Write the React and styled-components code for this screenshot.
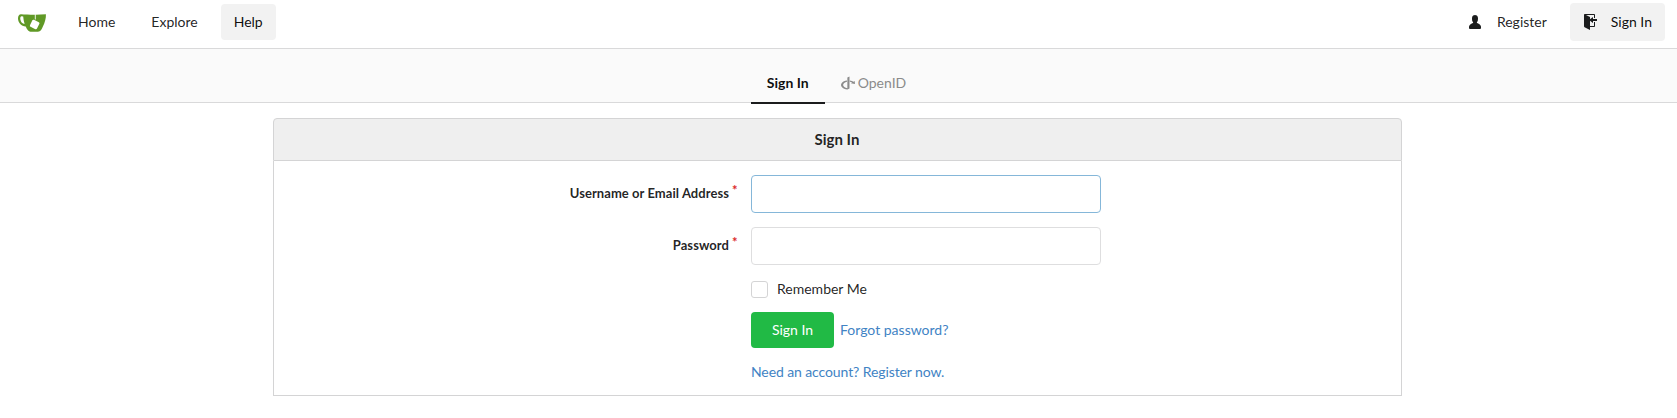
import React from "react";
import styled, { createGlobalStyle, css } from "styled-components";

const GlobalStyle = createGlobalStyle`
  *, *::before, *::after { box-sizing: border-box; }
  body {
    margin: 0;
    background: #fff;
    color: rgba(0, 0, 0, 0.87);
    font: 14px/20px Lato, "Liberation Sans", sans-serif;
  }
  a { color: inherit; text-decoration: none; }
`;

const Navbar = styled.nav`
  display: flex;
  align-items: flex-start;
  height: 49px;
  padding: 3px 12px 0 17px;
  border-bottom: 1px solid #d9d9da;
`;

const Brand = styled.a`
  display: flex;
  margin: 10px 18px 0 0;
`;

const NavItem = styled.a`
  display: flex;
  align-items: center;
  height: ${(p) => (p.$tall ? 38 : 36)}px;
  margin: ${(p) => (p.$tall ? "0 0 0 10px" : "1px 10px 0 0")};
  padding: 0 13px 1px 13px;
  border-radius: 4px;
  color: rgba(0, 0, 0, ${(p) => (p.$active ? 0.95 : 0.87)});
  background: ${(p) => (p.$active ? "#f2f2f2" : "transparent")};

  svg { margin-right: ${(p) => p.$iconGap || 0}px; fill: #1b1c1d; }
`;

const RightMenu = styled.div`
  display: flex;
  margin-left: auto;
`;

const TabBar = styled.div`
  display: flex;
  justify-content: center;
  align-items: flex-end;
  height: 54px;
  padding-right: 4px;
  background: #fafafa;
  border-bottom: 1px solid #d9d9da;
`;

const Tab = styled.a`
  display: flex;
  align-items: center;
  height: 40px;
  margin-bottom: -2px;
  padding: 0 16px;
  color: #8b8b8b;
  border-bottom: 2px solid transparent;
  ${(p) =>
    p.$active &&
    css`
      color: rgba(0, 0, 0, 0.95);
      font-weight: 700;
      border-bottom-color: #1b1c1d;
    `}
  svg { margin-right: 3px; fill: currentColor; }
`;

const Panel = styled.main`
  width: 1129px;
  margin: 15px auto 0 273px;
`;

const PanelHeader = styled.h4`
  display: flex;
  justify-content: center;
  align-items: center;
  height: 43px;
  margin: 0;
  padding: 0 1px 2px 0;
  border: 1px solid #d4d4d5;
  border-radius: 4px 4px 0 0;
  background: #efefef;
  font-size: 15px;
  font-weight: 700;
`;

const Form = styled.form`
  display: flex;
  flex-direction: column;
  height: 235px;
  padding-top: 14px;
  border: 1px solid #d4d4d5;
  border-top: 0;
`;

const Row = styled.div`
  display: grid;
  grid-template-columns: 463px 1fr;
  column-gap: 14px;
  align-items: center;
  height: ${(p) => p.$height}px;
  margin-bottom: ${(p) => p.$after}px;
`;

const Label = styled.label`
  display: flex;
  justify-content: flex-end;
  align-items: flex-start;
  height: 22px;
  font-size: 13px;
  font-weight: 700;
  letter-spacing: 0.06px;

  &::after {
    content: "*";
    width: 5px;
    margin: -3px 0 0 3px;
    color: #db2828;
  }
`;

const Input = styled.input`
  width: 350px;
  height: 38px;
  padding: 9px 14px;
  border: 1px solid ${(p) => (p.$focused ? "#85b7d9" : "#dededf")};
  border-radius: 4px;
  background: #fff;
  font: inherit;
  outline: none;
`;

const Controls = styled.div`
  grid-column: 2;
  display: flex;
  align-items: center;
`;

const Checkbox = styled.input`
  appearance: none;
  width: 17px;
  height: 17px;
  margin: 0 9px 0 0;
  border: 1px solid #d4d4d5;
  border-radius: 3px;
  background: #fff;
`;

const SubmitButton = styled.button`
  width: 83px;
  height: 36px;
  margin: 0 6px 0 0;
  padding: 0;
  border: 0;
  border-radius: 4px;
  background: #21ba45;
  color: #fff;
  font: inherit;
`;

const Link = styled.a`
  color: #4183c4;
  letter-spacing: ${(p) => (p.$tight ? "-0.1px" : "normal")};
`;

const TeaLogo = () => (
  <svg width="30" height="20" viewBox="0 0 30 20">
    <path
      fill="#609926"
      fillRule="evenodd"
      d="M4 1.2C8 1.4 14 1.8 18.5 1.7L28.9 1.2C29.2 5 27.8 9.5 26 13.3C24.6 16.6 23.6 18.5 21 18.8H13.5C11 18.6 9.7 15.7 8.7 13.6C4.3 13.1 1.1 9.8 1 5.5C1 3 2.1 1.2 4 1.2ZM4.7 3.3C3.4 3.4 3 4.7 3.4 6.7C4 9.2 5.3 10.5 7.6 11C6.8 8.7 6.4 6.1 6.2 3.5Z"
    />
    <path d="M18.3 1.2V6.5" stroke="#fff" strokeWidth=".9" />
    <rect x="13.8" y="7.5" width="7.8" height="7.8" rx="1.2" transform="rotate(26 17.5 11.4)" fill="#fff" />
  </svg>
);

const PersonIcon = () => (
  <svg width="12" height="16" viewBox="0 0 12 16">
    <path d="M12 14.002a.998.998 0 0 1-.998.998H1.001A1 1 0 0 1 0 13.999V13c0-2.633 4-4 4-4s.229-.409 0-1c-.841-.62-.944-1.59-1-4 .173-2.413 1.867-3 3-3s2.827.586 3 3c-.056 2.41-.159 3.38-1 4-.229.59 0 1 0 1s4 1.367 4 4v1.002z" />
  </svg>
);

const SignInIcon = () => (
  <svg width="14" height="16" viewBox="0 0 14 16">
    <path d="M7 6.75V12h4V8h1v4c0 .55-.45 1-1 1H7v3l-5.45-2.72c-.33-.17-.55-.52-.55-.91V1c0-.55.45-1 1-1h9c.55 0 1 .45 1 1v3h-1V1H3l4 2v2.25L10 3v2h4v2h-4v2L7 6.75z" />
  </svg>
);

const OpenIdIcon = () => (
  <svg width="14" height="14" viewBox="0 0 1792 1792">
    <path
      transform="matrix(1 0 0 -1 0 1600)"
      d="M1086 1536v-1536l-272 -128q-228 20 -414 102t-293 208.5t-107 272.5q0 140 100.5 263.5t275 205.5t391.5 108v-172q-217 -38 -356.5 -150t-139.5 -255q0 -152 154.5 -267t388.5 -145v1360zM1755 954l37 -390l-525 114l147 83q-119 70 -280 99v172q277 -33 481 -157z"
    />
  </svg>
);

export default function App() {
  return (
    <>
      <GlobalStyle />
      <Navbar>
        <Brand href="#"><TeaLogo /></Brand>
        <NavItem href="#">Home</NavItem>
        <NavItem href="#">Explore</NavItem>
        <NavItem href="#" $active>Help</NavItem>
        <RightMenu>
          <NavItem href="#" $tall $iconGap={16}><PersonIcon />Register</NavItem>
          <NavItem href="#" $tall $active $iconGap={14}><SignInIcon />Sign In</NavItem>
        </RightMenu>
      </Navbar>
      <TabBar>
        <Tab href="#" $active>Sign In</Tab>
        <Tab href="#"><OpenIdIcon />OpenID</Tab>
      </TabBar>
      <Panel>
        <PanelHeader>Sign In</PanelHeader>
        <Form>
          <Row $height={38} $after={14}>
            <Label htmlFor="user">Username or Email Address</Label>
            <Input id="user" $focused />
          </Row>
          <Row $height={38} $after={14}>
            <Label htmlFor="password">Password</Label>
            <Input id="password" type="password" />
          </Row>
          <Row $height={18} $after={15}>
            <Controls><Checkbox id="remember" type="checkbox" /><label htmlFor="remember">Remember Me</label></Controls>
          </Row>
          <Row $height={36} $after={14}>
            <Controls><SubmitButton type="button">Sign In</SubmitButton><Link href="#">Forgot password?</Link></Controls>
          </Row>
          <Row $height={20} $after={0}>
            <Controls><Link href="#" $tight>Need an account? Register now.</Link></Controls>
          </Row>
        </Form>
      </Panel>
    </>
  );
}
